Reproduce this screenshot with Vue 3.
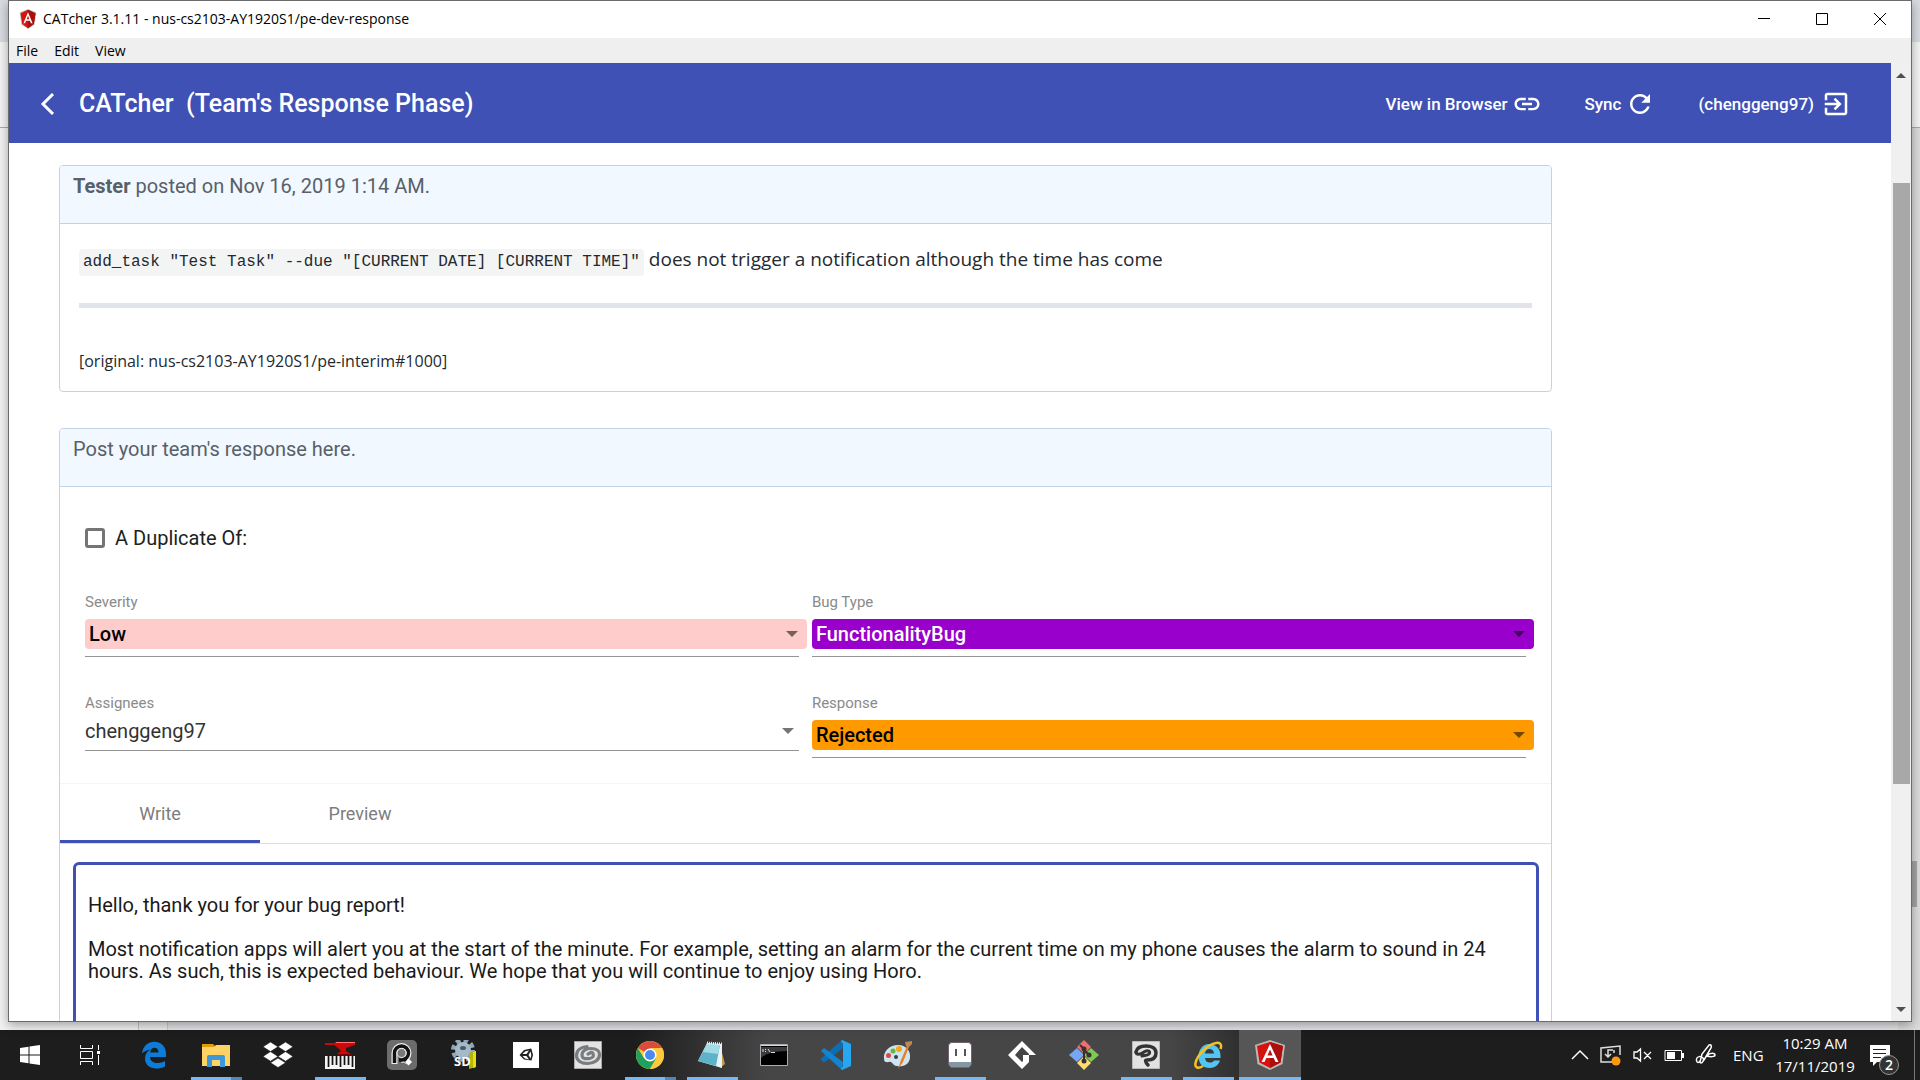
<script setup>
import { ref } from 'vue'

const duplicate = ref(false)
const fields = [
  { id: 'severity', label: 'Severity', tone: 'pill low', options: ['Low', 'Medium', 'High'] },
  { id: 'bug-type', label: 'Bug Type', tone: 'pill functionality', options: ['FunctionalityBug', 'DocumentationBug'] },
  { id: 'assignees', label: 'Assignees', tone: 'plain', options: ['chenggeng97'] },
  { id: 'response', label: 'Response', tone: 'pill rejected', options: ['Rejected', 'Accepted', 'IssueUnclear'] },
]
const reply = ref(
  'Hello, thank you for your bug report!\n\nMost notification apps will alert you at the start of the minute. For example, setting an alarm for the current time on my phone causes the alarm to sound in 24 hours. As such, this is expected behaviour. We hope that you will continue to enjoy using Horo.'
)
</script>

<template>
  <div class="desktop">
    <div class="stage">
      <div class="behind">
        <div class="behind-tabs"></div>
        <div class="behind-bar"></div>
        <div class="behind-page">
          <span class="behind-side"></span>
          <span class="behind-gutter"></span>
          <span class="behind-body"></span>
          <span class="behind-scroll"><i></i></span>
        </div>
      </div>

      <div class="window">
        <div class="titlebar">
          <svg class="app-icon" viewBox="0 0 20 24">
            <path d="M10 0L20 4 18 19 10 24 2 19 0 4Z" fill="#c9c9c9" />
            <path d="M10 1L19 5 17 18 10 23 3 18 1 5Z" fill="#d6120f" />
            <path d="M10 1L19 5 17 18 10 23Z" fill="#a90f0c" />
            <path d="M10 4L15.500 17H13.500L12.300 14H7.700L6.500 17H4.500ZM10 8L8.400 12.200H11.600Z" fill="#fff" fill-rule="evenodd" />
          </svg>
          <span class="window-title">CATcher 3.1.11 - nus-cs2103-AY1920S1/pe-dev-response</span>
          <div class="window-buttons">
            <button aria-label="Minimize"><svg width="14" height="14"><path d="M1 6.500H13" /></svg></button>
            <button aria-label="Maximize"><svg width="14" height="14"><path d="M1.500 1.500H12.500V12.500H1.500Z" /></svg></button>
            <button aria-label="Close"><svg width="14" height="14"><path d="M1 1L13 13M13 1L1 13" /></svg></button>
          </div>
        </div>
        <nav class="menubar">
          <button>File</button>
          <button>Edit</button>
          <button>View</button>
        </nav>

        <div class="viewport">
          <div class="document">
            <header class="toolbar">
              <button class="back" aria-label="Back">
                <svg width="18" height="26" viewBox="0 0 18 26"><path d="M15 3L5 13 15 23" fill="none" stroke="#fff" stroke-width="3" /></svg>
              </button>
              <h1>CATcher&nbsp; (Team's Response Phase)</h1>
              <div class="actions">
                <button class="action">View in Browser
                  <svg viewBox="0 0 24 24"><path d="M3.900 12c0-1.710 1.390-3.100 3.100-3.100h4V7H7c-2.760 0-5 2.240-5 5s2.240 5 5 5h4v-1.900H7c-1.710 0-3.100-1.390-3.100-3.100zM8 13h8v-2H8v2zm9-6h-4v1.900h4c1.710 0 3.100 1.390 3.100 3.100s-1.390 3.100-3.100 3.100h-4V17h4c2.760 0 5-2.240 5-5s-2.240-5-5-5z" /></svg>
                </button>
                <button class="action">Sync
                  <svg viewBox="0 0 24 24"><path d="M17.650 6.350C16.200 4.900 14.210 4 12 4c-4.420 0-7.990 3.580-7.990 8s3.570 8 7.990 8c3.730 0 6.840-2.550 7.730-6h-2.080c-.82 2.330-3.040 4-5.650 4-3.310 0-6-2.690-6-6s2.690-6 6-6c1.660 0 3.140.69 4.220 1.780L13 11h7V4l-2.350 2.350z" /></svg>
                </button>
                <button class="action user">(chenggeng97)
                  <svg viewBox="0 0 24 24"><path d="M10.090 15.590L11.500 17l5-5-5-5-1.410 1.410L12.670 11H3v2h9.670l-2.580 2.590zM19 3H5c-1.110 0-2 .9-2 2v4h2V5h14v14H5v-4H3v4c0 1.100.89 2 2 2h14c1.100 0 2-.9 2-2V5c0-1.100-.9-2-2-2z" /></svg>
                </button>
              </div>
            </header>

            <main class="page">
              <section class="card">
                <div class="card-head"><strong>Tester</strong> posted on Nov 16, 2019 1:14 AM.</div>
                <div class="comment">
                  <p><code>add_task "Test Task" --due "[CURRENT DATE] [CURRENT TIME]"</code> does not trigger a notification although the time has come</p>
                  <hr />
                  <small>[original: nus-cs2103-AY1920S1/pe-interim#1000]</small>
                </div>
              </section>

              <section class="card">
                <div class="card-head">Post your team's response here.</div>
                <form class="response" @submit.prevent>
                  <label class="duplicate" for="duplicate">
                    <input id="duplicate" v-model="duplicate" type="checkbox" />A Duplicate Of:
                  </label>
                  <div class="fields">
                    <div v-for="f in fields" :key="f.id" class="field" :class="f.tone">
                      <label :for="f.id">{{ f.label }}</label>
                      <div class="control">
                        <select :id="f.id">
                          <option v-for="o in f.options" :key="o">{{ o }}</option>
                        </select>
                      </div>
                    </div>
                  </div>
                </form>
                <div class="tabs" role="tablist">
                  <button class="tab active" role="tab">Write</button>
                  <button class="tab" role="tab">Preview</button>
                </div>
                <textarea v-model="reply" class="editor" aria-label="Team's response" spellcheck="false"></textarea>
              </section>
            </main>
          </div>

          <div class="scrollbar">
            <svg width="10" height="6"><path d="M0 6L5 1 10 6Z" /></svg>
            <div class="track"><div class="thumb"></div></div>
            <svg width="10" height="6"><path d="M0 0L5 5 10 0Z" /></svg>
          </div>
        </div>
      </div>
    </div>

    <footer class="taskbar">
      <button class="start" aria-label="Start">
        <svg width="20" height="20" viewBox="0 0 20 20"><path d="M0 3L8.500 1.700V9.500H0ZM9.500 1.500L20 0V9.500H9.500ZM0 10.500H8.500V18.300L0 17ZM9.500 10.500H20V20L9.500 18.500Z" fill="#fff" /></svg>
      </button>
      <button class="start" aria-label="Task View">
        <svg width="22" height="20" viewBox="0 0 22 20"><path d="M1.500 0V3.500H13.500V0M1.500 20V16.500H13.500V20M1.500 6.500H13.500V13.500H1.500ZM19.500 0V5M19.500 10V20" fill="none" stroke="#fff" /><path d="M18 6H21V9H18Z" fill="#fff" /></svg>
      </button>

      <button class="app" aria-label="Edge">
        <svg width="26" height="28" viewBox="0 0 26 28"><path d="M1 12.500C2 5 7 .8 13.500 .8 20.500 .8 25 6 25 12.500V16H9C9.200 20 12.500 22 16.500 22 19.500 22 22 21.200 24 20V25.500C21.500 27 18.500 27.500 15.500 27.500 8.500 27.500 4 23.500 4 17.500 4 13.500 6 10.300 9.500 8.500 6 9 3 10.500 1 12.500ZM9.200 11.500H17.500C17.500 8.500 16 6.800 13.500 6.800 11 6.800 9.500 8.700 9.200 11.500Z" fill="#0c7cd8" fill-rule="evenodd" /></svg>
      </button>
      <button class="app run stacked" aria-label="File Explorer">
        <svg width="28" height="24" viewBox="0 0 28 24"><path d="M0 1H11L13 3V6H0Z" fill="#e09c0a" /><path d="M0 4H12L14 2H28V23H0Z" fill="#fcd364" /><path d="M5 24V14Q5 12 7 12H21Q23 12 23 14V24H18V17H10V24Z" fill="#3d97db" /></svg>
      </button>
      <button class="app" aria-label="Dropbox">
        <svg width="30" height="26" viewBox="0 0 30 26"><path d="M7.500 0L15 4.800 7.500 9.600 0 4.800ZM22.500 0L30 4.800 22.500 9.600 15 4.800ZM7.500 9.600L15 14.400 7.500 19.200 0 14.400ZM22.500 9.600L30 14.400 22.500 19.200 15 14.400ZM15 16L22.500 20.800 15 25.600 7.500 20.800Z" fill="#fff" stroke="#1c1c1c" stroke-width=".6" /></svg>
      </button>
      <button class="app run" aria-label="Piano Forge">
        <svg width="30" height="28" viewBox="0 0 30 28"><path d="M0 2H10V1H30V4L21 7V10L26 13V15H12V13L16 10 13 7 9 4H0Z" fill="#cc0808" /><path d="M11 1H30V2H11Z" fill="#f77" /><path d="M12 13H27V15H12Z" fill="#700" /><path d="M0 15H30V28H0Z" fill="#f4f4f4" /><path d="M3.500 15V26M7.500 15V24M11.500 15V24M15.500 15V26M19.500 15V24M23.500 15V24M27.500 15V26" stroke="#111" stroke-width="1.700" /></svg>
      </button>
      <button class="app" aria-label="Recorder">
        <svg width="30" height="30" viewBox="0 0 30 30"><rect width="30" height="30" rx="5" fill="#6c6c6c" /><path d="M7.500 24V13A7 7 0 1 1 14.500 20M17 18L21 22" fill="none" stroke="#eee" stroke-width="6" /><path d="M7.500 23V13A7 7 0 1 1 14.500 20H12" fill="none" stroke="#111" stroke-width="3.500" /><circle cx="14.500" cy="13" r="4.500" fill="#777" stroke="#eee" /><path d="M16 18L20 22" stroke="#111" stroke-width="3" /><path d="M21.500 18.500L25 22 21.500 25.500 18 22Z" fill="#fff" /></svg>
      </button>
      <button class="app" aria-label="SD Tool">
        <svg width="28" height="30" viewBox="0 0 28 30"><circle cx="13" cy="10" r="9.500" fill="none" stroke="#8fa7b6" stroke-width="5" stroke-dasharray="4.500 3" /><circle cx="13" cy="10" r="8" fill="#a5bac7" /><ellipse cx="13" cy="8" rx="3" ry="2" fill="#465d6b" /><path d="M19 13L26 11V27L19 29Z" fill="#b6b500" /><path d="M23 12L26 11V27L23 28Z" fill="#e3df10" /><text x="4" y="26" class="sd-text">SD</text></svg>
      </button>
      <button class="app" aria-label="Unity">
        <svg width="26" height="26" viewBox="0 0 26 26"><path d="M0 0H26V26H0Z" fill="#fff" /><path d="M11 8L18 6.500 18.500 7 20 13 18.500 18.500 11 17.500 6.500 13ZM9.500 12H13.500L16 8.500 12 9.500ZM9.500 14L12 16.500 16 17.500 13.500 14ZM15.500 13L17.500 16.500 18.300 13 17.500 9.500Z" fill="#222" fill-rule="evenodd" /></svg>
      </button>
      <button class="app" aria-label="Clip Studio">
        <svg width="28" height="28" viewBox="0 0 28 28"><path d="M.5 .5H27.500V27.500H.5Z" fill="#e4e4e4" stroke="#aaa" /><path d="M13 5.500C7 6 2.500 9 2.500 14.500S8 22.500 14 22.500 25.500 19 25.500 13.500 21 7.500 16.500 7.500 8 10 8 14 12 18 15.500 17.500 20 15 19 12.500 16 12 14 13" fill="none" stroke="#7a7d80" stroke-width="3.200" stroke-linecap="round" /></svg>
      </button>
      <button class="app run stacked" aria-label="Chrome">
        <svg width="28" height="28" viewBox="0 0 28 28"><circle cx="14" cy="14" r="14" fill="#fdc93c" /><path d="M14 14L1.900 7A14 14 0 0 1 26.100 7Z" fill="#da4a3d" /><path d="M1.900 7A14 14 0 0 0 14 28L20 17.500 8 17.500Z" fill="#1fa05d" /><path d="M14 7H26.100A14 14 0 0 1 14 28L20.500 17Z" fill="#fdc93c" /><circle cx="14" cy="14" r="6.500" fill="#fff" /><circle cx="14" cy="14" r="5" fill="#4a89f0" /></svg>
      </button>
      <button class="app run" aria-label="Notepad">
        <svg width="28" height="28" viewBox="0 0 28 28"><path d="M22 4L27 23 22 27Z" fill="#c59a4b" /><path d="M9 2L24 3 24 27 0 20Z" fill="#e8f3f6" /><path d="M9 3L22 4 18 25 0 20Z" fill="#5fb3c8" /><path d="M9 3L22 4 20 13 5 11Z" fill="#a2dbe6" /><path d="M9 2L24 3" stroke="#e9eeee" stroke-width="3" stroke-dasharray="1 1" /></svg>
      </button>
      <button class="app" aria-label="Command Prompt">
        <svg width="28" height="22" viewBox="0 0 28 22"><path d="M.5 .5H27.500V21.500H.5Z" fill="#000" stroke="#a8adb3" /><path d="M1 1.500H27" stroke="#d5d9de" /><path d="M1 3H27V7Q8 7 1 14Z" fill="#3b3b3b" /><path d="M3 5V8M5.500 5V6M5.500 7V8M8 5L10 8M11 8.500H15" stroke="#ddd" fill="none" /></svg>
      </button>
      <button class="app" aria-label="Visual Studio Code">
        <svg width="30" height="30" viewBox="0 0 30 30"><path d="M21 0L22 8 4 22 2 22 0 20V18.500Z" fill="#0b6fb8" /><path d="M0 11L3 8 22 22 21 30Z" fill="#1484cf" /><path d="M21 0L30 4V26L21 30 20 29 22 26V4L20 1Z" fill="#27a6f1" /></svg>
      </button>
      <button class="app" aria-label="Paint">
        <svg width="30" height="30" viewBox="0 0 30 30"><path d="M1 19C0 11 7 5 15 5S28 11 27 18 20 27 14 26C9 26 10 21 6 22 3 22.500 1 22 1 19Z" fill="#cfe4f1" /><circle cx="5.500" cy="15.500" r="2.500" fill="#e2483d" /><circle cx="10" cy="11" r="2.500" fill="#65b83f" /><circle cx="16" cy="9" r="3" fill="#f6a91c" /><circle cx="13" cy="17" r="2" fill="#35414c" /><path d="M15 29L18 20 24 6 26 7 20 22Z" fill="#e78025" /><path d="M22 2L29 1 29 4 25 8 23 6Z" fill="#b98a55" /></svg>
      </button>
      <button class="app run" aria-label="Horo">
        <svg width="26" height="28" viewBox="0 0 26 28"><path d="M3 1H23L25 4V23L22 27H4L1 23V4Z" fill="#73616f" /><path d="M4 2H22L24 4V22H2V4Z" fill="#fff" /><path d="M2 21H24V24L22 26H4L2 24Z" fill="#8498a3" /><path d="M9 8V15M18 8V15" stroke="#59525c" stroke-width="2" /></svg>
      </button>
      <button class="app" aria-label="GameMaker">
        <svg width="28" height="28" viewBox="0 0 28 28"><path d="M14 0L28 14H21V21L14 28 0 14ZM14 6L7 14 14 21 15 20V14H21V13Z" fill="#fff" fill-rule="evenodd" /></svg>
      </button>
      <button class="app" aria-label="Git">
        <svg width="30" height="30" viewBox="0 0 30 30"><path d="M15 0L22 7 15 14 8 7Z" fill="#ef7070" /><path d="M8 8L15 15 8 22 0 15Z" fill="#77a6f6" /><path d="M22 8L30 15 22 22 15 15Z" fill="#7fc956" /><path d="M15 16L22 23 15 30 8 23Z" fill="#fbdd70" /><path d="M11 5L15 9V22M15 10L20 15" stroke="#3a3030" stroke-width="2" fill="none" /><circle cx="15" cy="9" r="2.500" fill="#3a3030" /><circle cx="20" cy="15" r="2.500" fill="#3a3030" /><circle cx="15" cy="21" r="2.500" fill="#3a3030" /></svg>
      </button>
      <button class="app run" aria-label="Clip Studio Paint">
        <svg width="28" height="28" viewBox="0 0 28 28"><path d="M.5 .5H27.500V27.500H.5Z" fill="#e2e2e2" stroke="#bbb" /><path d="M4 11C5 6 9 5 14 5S24 7 24 12 20 19 15 19C13 19 13 21 16 24" fill="none" stroke="#333" stroke-width="3.500" stroke-linecap="round" /><path d="M4 11C4 14 8 14 12 11S19 11 17 13 12 14 10 15" fill="none" stroke="#333" stroke-width="3" stroke-linecap="round" /></svg>
      </button>
      <button class="app run" aria-label="Internet Explorer">
        <svg width="30" height="28" viewBox="0 0 30 28"><path d="M16 3C23 3 27.500 8 27.500 14.500V17H12C12.300 20 14 21.500 17 21.500 19 21.500 20 21 21 19.500H27C25.500 24 22 27 16.500 27 10 27 5.500 22.500 5.500 15.500S10 3 16 3ZM12 12.500H21C20.800 9.500 19 8 16.500 8S12.200 9.500 12 12.500Z" fill="#53c5f2" fill-rule="evenodd" /><path d="M27.500 8C29 4 27.500 1 23 2 15 3.500 4 14 2.500 22 1.500 27 5 28 10 25" fill="none" stroke="#f5c126" stroke-width="2.500" /></svg>
      </button>
      <button class="app run current" aria-label="CATcher">
        <svg width="30" height="30" viewBox="0 0 30 30"><path d="M15 0L30 5 27.500 24 15 30 2.500 24 0 5Z" fill="#b9b9b9" /><path d="M15 2L28 6 25.500 22.500 15 28 4.500 22.500 2 6Z" fill="#d6120f" /><path d="M15 2L28 6 25.500 22.500 15 28Z" fill="#ab0e0c" /><path d="M15 4L23.500 22H20.500L18.700 18H11.300L9.500 22H6.500ZM15 9.500L12.400 15.500H17.600Z" fill="#fff" fill-rule="evenodd" /></svg>
      </button>

      <div class="tray">
        <svg width="18" height="30" viewBox="0 0 18 30"><path d="M1 19L9 11 17 19" fill="none" stroke="#fff" stroke-width="1.500" /></svg>
        <svg width="22" height="30" viewBox="0 0 22 30"><path d="M12 22H1V8L20 6V15" fill="none" stroke="#ddd" stroke-width="1.500" /><path d="M13 10H8V16M5 14L8 17 11 14M14 10V13" fill="none" stroke="#ddd" stroke-width="1.500" /><circle cx="16" cy="21" r="4.500" fill="#ff9a10" /></svg>
        <svg width="20" height="30" viewBox="0 0 20 30"><path d="M1 12H4L7.500 9V21L4 18H1ZM11 12L18 19M18 12L11 19" fill="none" stroke="#fff" stroke-width="1.300" /></svg>
        <svg width="20" height="30" viewBox="0 0 20 30"><path d="M1 10.500H17.500V20.500H1Z" fill="none" stroke="#fff" /><path d="M3 12H11V19H3ZM18 13H20V18H18Z" fill="#fff" /></svg>
        <svg width="22" height="30" viewBox="0 0 22 30"><path d="M5 21C3 24 1 22 1.500 19 2 16 6 16 8 18 10 20 6 25 5 22L7 14 14 5C16 4 17 6 16 8L9 20M12 16C15 12 20 13 20 15S15 17 12 16" fill="none" stroke="#fff" stroke-width="1.500" /></svg>
        <span class="lang">ENG</span>
        <div class="clock"><span>10:29 AM</span><span>17/11/2019</span></div>
        <button class="notices" aria-label="Notifications">
          <svg width="22" height="22" viewBox="0 0 22 22"><path d="M1 1H21V18H8L4 22V18H1Z" fill="#fff" /><path d="M4 5.500H17M4 9.500H17M4 13.500H12" stroke="#222" /></svg>
          <span class="count">2</span>
        </button>
        <span class="peek"></span>
      </div>
    </footer>
  </div>
</template>

<style>
body { margin: 0; }
</style>

<style scoped>
* { box-sizing: border-box; }
button { border: 0; padding: 0; background: none; font: inherit; color: inherit; }
svg { display: block; flex: none; }
.desktop { display: flex; flex-direction: column; height: 100vh; overflow: hidden; font-family: Roboto, sans-serif; }
.stage { position: relative; flex: 1; min-height: 0; display: flex; padding: 0 8px 8px; }

.behind { position: absolute; inset: 0; display: flex; flex-direction: column; background: #eee; }
.behind-tabs { height: 42px; background: #d8dbe0; }
.behind-bar { height: 86px; background: #f4f4f4; border-bottom: 1px solid #a9a9a9; }
.behind-page { flex: 1; display: flex; }
.behind-side { width: 139px; background: #f3f3f3; border-right: 1px solid #c4c4c4; }
.behind-gutter { width: 29px; background: #eee; border-right: 1px solid #ccc; }
.behind-body { flex: 1; background: #e3e5e8; }
.behind-scroll { width: 22px; padding-top: 733px; background: #dcdcdc; }
.behind-scroll i { display: block; width: 19px; height: 46px; background: #a6a6a6; }

.window { position: relative; flex: 1; min-width: 0; display: flex; flex-direction: column; border: 1px solid #6b6b6b; background: #fff; box-shadow: 0 3px 10px rgba(0, 0, 0, .35); }
.titlebar { display: flex; align-items: center; height: 37px; padding: 0 2px 1px 9px; }
.app-icon { width: 20px; height: 20px; }
.window-title { margin-left: 5px; font: 14px/20px "Open Sans", sans-serif; color: #000; }
.window-buttons { display: flex; margin-left: auto; }
.window-buttons button { display: grid; place-items: center; width: 58px; height: 36px; }
.window-buttons path { fill: none; stroke: #000; stroke-width: 1; }
.menubar { display: flex; align-items: center; gap: 16px; height: 25px; padding-left: 7px; background: #efefef; font: 14px/20px "Open Sans", sans-serif; }

.viewport { flex: 1; min-height: 0; display: flex; }
.document { flex: 1; min-width: 0; overflow: hidden; }
.toolbar { display: flex; align-items: center; height: 80px; padding: 2px 40px 0 29px; background: #3f51b5; color: #fff; }
.back { margin-right: 23px; }
h1 { margin: 0; font-size: 25px; line-height: 32px; font-weight: 500; }
.actions { display: flex; gap: 43px; margin-left: auto; }
.action { display: flex; align-items: center; gap: 4px; font-size: 17px; font-weight: 500; line-height: 32px; white-space: nowrap; }
.action.user { gap: 7px; }
.action svg { width: 30px; height: 30px; fill: #fff; }

.page { padding: 22px 8px; }
.card { width: 80%; margin: 0 0 36px 42px; border: 1px solid #c0d3eb; border-radius: 4px; background: #fff; }
.card-head { height: 58px; padding: 8px 13px; border-bottom: 1px solid #c0d3eb; border-radius: 3px 3px 0 0; background: #f1f8ff; color: #586069; font-size: 20px; line-height: 24px; }
.comment { padding: 20px 19px 18px; color: #24292e; font-family: "Open Sans", sans-serif; }
.comment p { height: 30px; margin: 0; font-size: 19px; line-height: 30px; white-space: nowrap; }
.comment code { padding: 4px 4px 5px; border-radius: 4px; background: #f3f4f4; font-family: "Liberation Mono", monospace; font-size: 16px; line-height: 20px; }
.comment hr { height: 5px; margin: 29px 0 41px; border: 0; background: #e1e4e8; }
.comment small { display: block; font-size: 16px; line-height: 24px; }

.response { padding: 39px 25px 25px; }
.duplicate { display: flex; align-items: center; gap: 10px; height: 24px; font-size: 20px; color: #212121; }
.duplicate input { appearance: none; width: 20px; height: 20px; margin: 0; border: 3px solid #757575; border-radius: 3px; background: #fff; }
.fields { display: grid; grid-template-columns: 1fr 1fr; gap: 36px 13px; margin-top: 42px; }
.field label { display: block; font-size: 15px; line-height: 20px; color: #8a8a8a; }
.control { position: relative; padding: 6px 0 7px; border-bottom: 1px solid #949494; }
.control::after { content: ""; position: absolute; top: 15px; right: 5px; border: 6px solid transparent; border-top-color: rgba(0, 0, 0, .54); border-bottom: 0; pointer-events: none; }
.pill .control { padding-top: 7px; }
.pill .control::after { top: 19px; right: 1px; }
select { display: block; appearance: none; width: 100%; height: 24px; padding: 0; border: 0; background: none; font: 20px/24px Roboto, sans-serif; color: #333; }
.pill select { width: calc(100% + 8px); height: 30px; padding-left: 4px; border-radius: 4px; font-weight: 500; color: #000; }
.plain { align-self: start; }
.low select { background: #fcc; }
.functionality select { background: #90c; color: #fff; }
.rejected select { background: #f90; }

.tabs { display: flex; height: 61px; border-top: 1px solid #f4f4f4; border-bottom: 1px solid #dedede; }
.tab { width: 200px; border-bottom: 3px solid transparent; padding-top: 3px; font-size: 18px; color: #7d7d7d; }
.tab.active { border-bottom-color: #3f51b5; }
.editor { display: block; width: calc(100% - 25px); height: 320px; margin: 18px 12px 13px 13px; padding: 29px 12px; border: 3px solid #3f51b5; border-radius: 6px; outline: 0; resize: none; font: 20px/22px Roboto, sans-serif; color: #1a1a1a; }

.scrollbar { flex: none; display: flex; flex-direction: column; align-items: center; width: 20px; padding: 9px 0 8px; background: #f0f0f0; }
.scrollbar path { fill: #505050; }
.track { flex: 1; width: 17px; padding: 105px 0 223px; display: flex; }
.thumb { flex: 1; background: #a8a8a8; }

.taskbar { flex: none; display: flex; height: 50px; color: #fff; background: linear-gradient(90deg, #1d1d1d 33%, #464646 40%, #464646 61%, #2d2d2d 65%, #1d1d1d 68%); font-family: "Open Sans", sans-serif; }
.start { display: grid; place-items: center; width: 60px; }
.start + .app { margin-left: 3px; }
.app { position: relative; display: grid; place-items: center; flex: none; width: 62px; }
.run::after { content: ""; position: absolute; left: 6px; right: 5px; bottom: 0; height: 3px; background: #78b7f0; }
.stacked::after { background: linear-gradient(90deg, #78b7f0 40px, #5485b5 40px); }
.current { background: #565656; }
.current::after { left: 0; right: 0; }
.sd-text { font: 700 13px "Open Sans", sans-serif; fill: #fff; }
.tray { display: flex; align-items: center; margin-left: auto; }
.tray > svg { margin-right: 11px; }
.lang { width: 36px; margin-left: 5px; font-size: 15px; line-height: 20px; }
.clock { display: flex; flex-direction: column; align-items: center; width: 92px; font-size: 15px; line-height: 23px; }
.notices { position: relative; display: flex; align-items: flex-start; width: 30px; height: 50px; padding-top: 14px; margin-left: 8px; }
.count { position: absolute; left: 10px; top: 25px; width: 20px; height: 20px; border: 1px solid #999; border-radius: 50%; background: #333; font-size: 14px; font-weight: 600; line-height: 18px; text-align: center; }
.peek { width: 6px; height: 50px; margin-left: 15px; border-left: 1px solid #777; }
</style>
